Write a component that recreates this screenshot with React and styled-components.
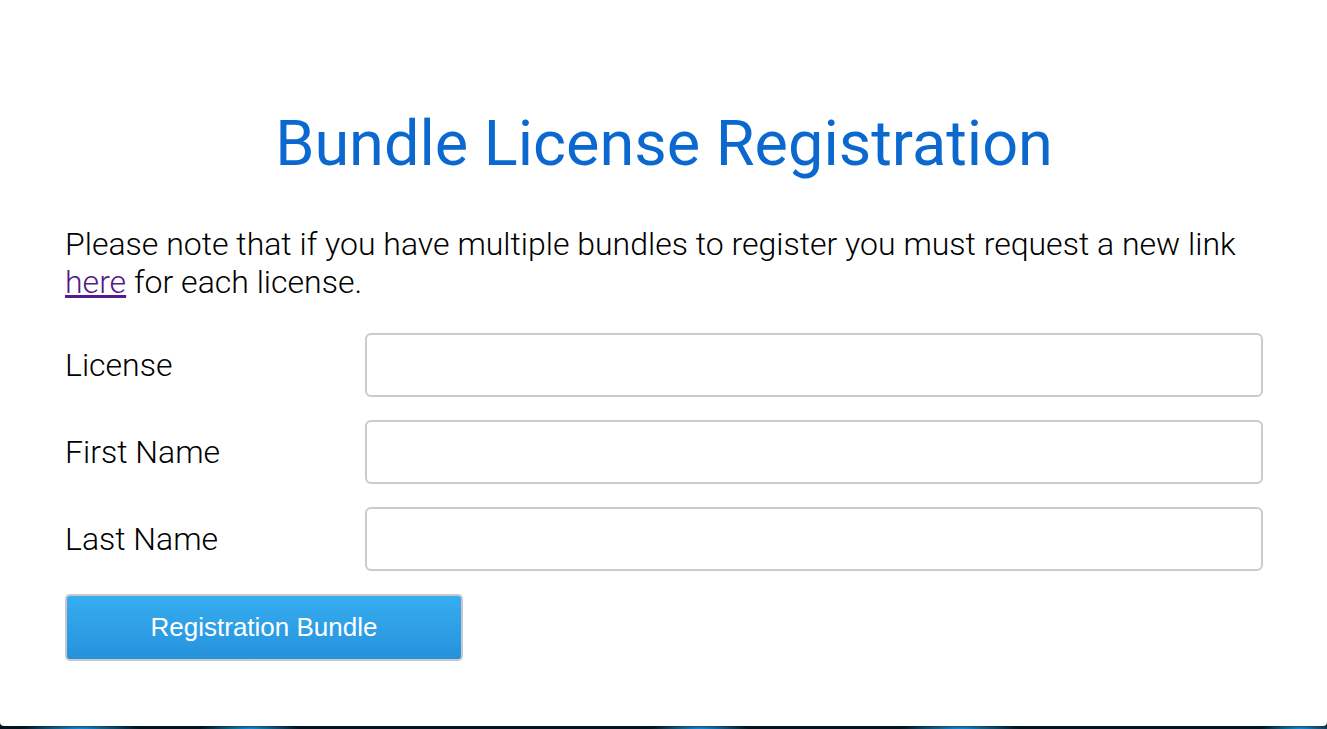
import React from "react";
import styled, { createGlobalStyle } from "styled-components";

const GlobalStyle = createGlobalStyle`
  html, body {
    margin: 0;
    padding: 0;
  }
  body {
    height: 729px;
    overflow: hidden;
    background-color: #04121c;
    background-image: radial-gradient(ellipse 60px 6px at 80px 729px, #1b8fd8 0%, transparent 100%),
      radial-gradient(ellipse 50px 6px at 250px 729px, #1b8fd8 0%, transparent 100%),
      radial-gradient(ellipse 50px 6px at 700px 729px, #1b8fd8 0%, transparent 100%),
      radial-gradient(ellipse 60px 6px at 960px 729px, #1b8fd8 0%, transparent 100%),
      radial-gradient(ellipse 40px 6px at 1300px 729px, #1b8fd8 0%, transparent 100%);
    font-family: Roboto, "Liberation Sans", sans-serif;
  }
`;

const Card = styled.div`
  box-sizing: border-box;
  height: 726px;
  background: #fff;
  border-radius: 0 0 4px 4px;
  padding: 100px 64px 0 65px;
`;

const Title = styled.h1`
  margin: 0 0 37px;
  text-align: center;
  font-size: 63px;
  line-height: 88px;
  font-weight: 400;
  color: #0a68cf;
`;

const Note = styled.p`
  margin: 0 0 32px;
  font-size: 32px;
  font-weight: 300;
  line-height: 38px;
  color: #000;

  a {
    color: #551a8b;
  }
`;

const Row = styled.label`
  display: grid;
  grid-template-columns: 300px 1fr;
  align-items: center;
  margin-bottom: 23px;
`;

const Label = styled.span`
  font-size: 32px;
  font-weight: 300;
  color: #000;
`;

const Input = styled.input`
  box-sizing: border-box;
  height: 64px;
  border: 2px solid #cbcbcb;
  border-radius: 6px;
  background: #fff;
  font-size: 24px;
  padding: 0 14px;
  outline: none;
`;

const Button = styled.button`
  box-sizing: border-box;
  width: 398px;
  height: 67px;
  border: 2px solid #c9c9c9;
  border-radius: 5px;
  background: linear-gradient(180deg, #37adf0 0%, #2592dc 100%);
  color: #fff;
  font-family: "Liberation Sans", Arial, sans-serif;
  font-size: 26px;
  cursor: pointer;
`;

const App = () => {
  return (
    <>
      <GlobalStyle />
      <Card>
        <Title>Bundle License Registration</Title>
        <Note>
          Please note that if you have multiple bundles to register you must
          request a new link <a href="#">here</a> for each license.
        </Note>
        <Row>
          <Label>License</Label>
          <Input type="text" />
        </Row>
        <Row>
          <Label>First Name</Label>
          <Input type="text" />
        </Row>
        <Row>
          <Label>Last Name</Label>
          <Input type="text" />
        </Row>
        <Button>Registration Bundle</Button>
      </Card>
    </>
  );
};

export default App;
